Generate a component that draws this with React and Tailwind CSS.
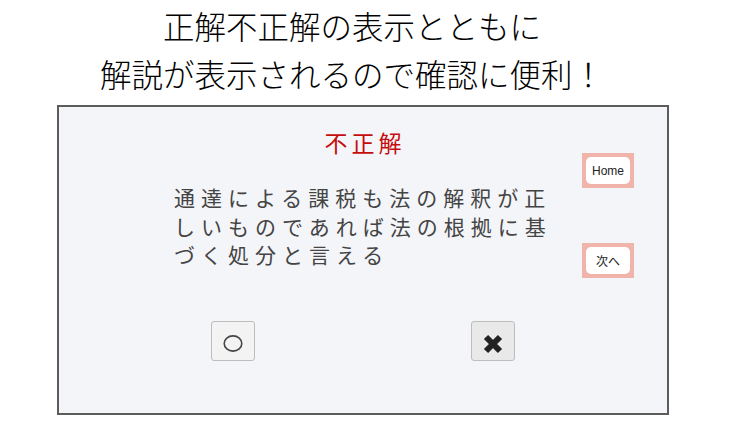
import React from 'react';

const jp = "font-['Noto_Sans_CJK_JP','Noto_Sans',sans-serif]";

// pink framed side button (Home / 次へ)
const SideButton = ({ label, latin }) => (
  <div className="w-[52px] h-[35px] bg-[#f1b4aa] p-[4px]">
    <div
      className={`w-full h-full bg-white rounded-[5px] flex items-center justify-center text-[12px] text-[#222] ${
        latin ? "font-['Liberation_Sans',Arial,sans-serif]" : jp
      }`}
    >
      {label}
    </div>
  </div>
);

const AnswerButton = ({ children, dark }) => (
  <div
    className={`w-[44px] h-[40px] rounded-[3px] border border-[#bdbdbd] flex items-center justify-center pt-[7px] ${
      dark ? 'bg-[#e9e9e9]' : 'bg-[#f3f3f3]'
    }`}
  >
    {children}
  </div>
);

export default function App() {
  const lines = [
    '通達による課税も法の解釈が正',
    'しいものであれば法の根拠に基',
    'づく処分と言える',
  ];

  return (
    <div className={`w-[750px] h-[422px] bg-white overflow-hidden ${jp}`}>
      {/* headline */}
      <div className="pt-[1px] pr-[46px] text-center text-[31.5px] leading-[48px] font-light text-black">
        <div>正解不正解の表示とともに</div>
        <div>解説が表示されるので確認に便利！</div>
      </div>

      {/* quiz panel */}
      <div className="mt-[8px] ml-[57px] w-[612px] h-[310px] border-2 border-[#5c5c5c] bg-[#f4f5f9] flex">
        <div className="w-[85px] shrink-0" />

        <div className="flex-1 flex flex-col items-center pt-[20px]">
          <div className="text-[23px] leading-[30px] tracking-[4px] pl-[4px] text-[#c50d0d]">不正解</div>

          <div className="mt-[26px] w-[378px] text-[21px] leading-[28.5px] tracking-[6px] text-[#444]">
            {lines.map((l) => (
              <div key={l} className="whitespace-nowrap">{l}</div>
            ))}
          </div>

          <div className="mt-[52px] flex gap-[216px]">
            <AnswerButton>
              <svg width="22" height="18" viewBox="0 0 22 18">
                <ellipse cx="11" cy="8.5" rx="8.8" ry="7.6" fill="none" stroke="#444" strokeWidth="1.6" />
              </svg>
            </AnswerButton>
            <AnswerButton dark>
              <svg width="22" height="22" viewBox="0 0 22 22">
                <path d="M4 4 L18 18 M18 4 L4 18" stroke="#222" strokeWidth="6" strokeLinecap="butt" />
              </svg>
            </AnswerButton>
          </div>
        </div>

        <div className="w-[85px] shrink-0 pr-[33px] pt-[46px] flex flex-col items-end gap-[55px]">
          <SideButton label="Home" latin />
          <SideButton label="次へ" />
        </div>
      </div>
    </div>
  );
}
